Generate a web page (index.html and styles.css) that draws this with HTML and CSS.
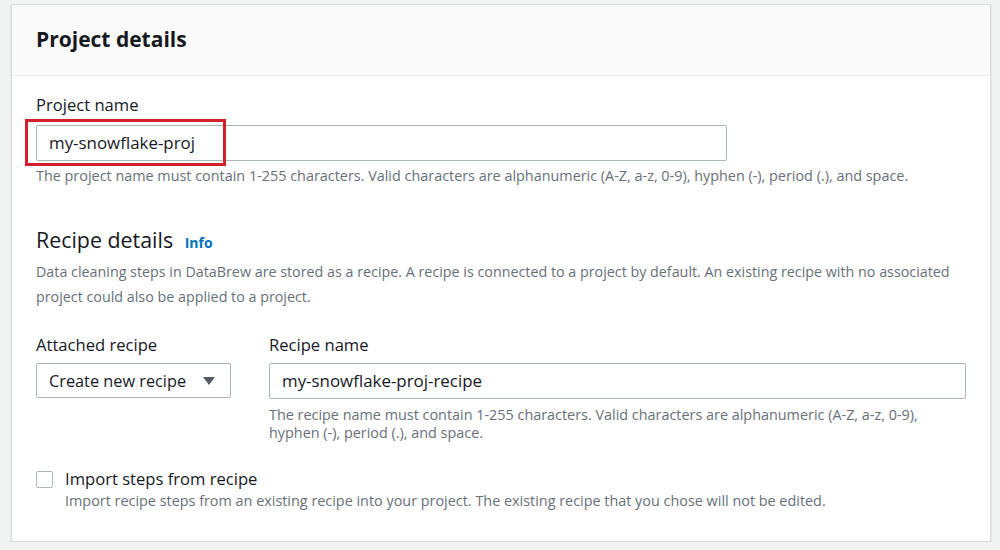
FILE: index.html
```html
<!DOCTYPE html>
<html lang="en">
<head>
<meta charset="utf-8">
<title>Project details</title>
<link rel="stylesheet" href="styles.css">
</head>
<body>
<div class="card">
  <div class="card-header">
    <h2 class="card-title">Project details</h2>
  </div>
  <div class="card-body">
    <div class="field">
      <label class="label">Project name</label>
      <div class="input-wrap project-input">
        <div class="input">my-snowflake-proj</div>
        <div class="highlight"></div>
      </div>
      <div class="hint">The project name must contain 1-255 characters. Valid characters are alphanumeric (A-Z, a-z, 0-9), hyphen (-), period (.), and space.</div>
    </div>

    <div class="section">
      <h3 class="section-title">Recipe details <a class="info">Info</a></h3>
      <p class="section-desc">Data cleaning steps in DataBrew are stored as a recipe. A recipe is connected to a project by default. An existing recipe with no associated project could also be applied to a project.</p>
    </div>

    <div class="row">
      <div class="col-left">
        <label class="label">Attached recipe</label>
        <div class="select">
          <span>Create new recipe</span>
          <svg class="caret" width="14" height="10" viewBox="0 0 14 10"><path d="M1 1h12L7 9z" fill="#545b64"/></svg>
        </div>
      </div>
      <div class="col-right">
        <label class="label">Recipe name</label>
        <div class="input">my-snowflake-proj-recipe</div>
        <div class="hint hint-small">The recipe name must contain 1-255 characters. Valid characters are alphanumeric (A-Z, a-z, 0-9), hyphen (-), period (.), and space.</div>
      </div>
    </div>

    <div class="check">
      <span class="box"></span>
      <div class="check-text">
        <div class="check-label">Import steps from recipe</div>
        <div class="check-desc">Import recipe steps from an existing recipe into your project. The existing recipe that you chose will not be edited.</div>
      </div>
    </div>
  </div>
</div>
</body>
</html>
```

FILE: styles.css
```css
* { box-sizing: border-box; }
body {
  margin: 0;
  padding: 4px 9px 0 11px;
  background: #f2f3f3;
  font-family: "Open Sans", "Noto Sans", sans-serif;
  color: #16191f;
}
.card {
  width: 980px;
  height: 538px;
  background: #fff;
  border: 1px solid #dcdede;
  box-shadow: 0 1px 1px rgba(0, 28, 36, 0.3);
}
.card-header {
  height: 71px;
  background: #fafafa;
  border-bottom: 1px solid #eaeded;
  padding: 0 24px;
  display: flex;
  align-items: center;
  padding-bottom: 2px;
}
.card-title {
  margin: 0;
  font-size: 21px;
  font-weight: 700;
  line-height: 28px;
}
.card-body {
  padding: 18px 24px 0 24px;
}
.label {
  display: block;
  font-size: 16.6px;
  line-height: 22px;
}
.input-wrap { position: relative; margin-top: 9px; }
.project-input { width: 691px; }
.input {
  height: 36px;
  border: 1px solid #aab7b8;
  border-radius: 2px;
  padding: 0 12px;
  font-size: 16.9px;
  line-height: 34px;
}
.highlight {
  position: absolute;
  left: -11px;
  top: -6px;
  width: 201px;
  height: 47px;
  border: 3px solid #d4202b;
}
.hint {
  margin-top: 5px;
  font-size: 14.4px;
  line-height: 20px;
  color: #687078;
}
.section { margin-top: 40px; }
.section-title {
  margin: 0;
  font-size: 21.4px;
  font-weight: 400;
  line-height: 28px;
}
.info {
  font-size: 14px;
  font-weight: 700;
  color: #0073bb;
  margin-left: 6px;
}
.section-desc {
  margin: 2px 0 0;
  font-size: 14.3px;
  line-height: 25px;
  color: #687078;
}
.row {
  display: flex;
  gap: 38px;
  margin-top: 25px;
}
.col-left { width: 195px; }
.col-right { flex: 1; }
.row .label { margin-bottom: 7px; }
.select {
  height: 35px;
  border: 1px solid #aab7b8;
  border-radius: 2px;
  padding: 0 14px 0 12px;
  display: flex;
  align-items: center;
  justify-content: space-between;
  font-size: 16.3px;
}
.hint-small {
  margin-top: 7px;
  line-height: 18px;
  padding-right: 40px;
}
.check {
  display: flex;
  gap: 12px;
  margin-top: 26px;
}
.box {
  width: 17px;
  height: 17px;
  margin-top: 3px;
  border: 1px solid #aab7b8;
  border-radius: 2px;
  flex: none;
}
.check-label {
  font-size: 16.6px;
  line-height: 22px;
}
.check-desc {
  font-size: 14.4px;
  line-height: 21px;
  color: #687078;
}
```
